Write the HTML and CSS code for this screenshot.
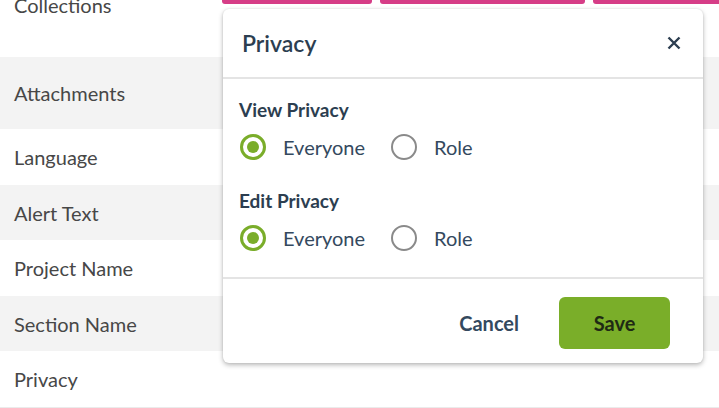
FILE: index.html
```html
<!DOCTYPE html>
<html>
<head>
<meta charset="utf-8">
<link rel="stylesheet" href="styles.css">
</head>
<body>
<div class="table">
  <div class="row row-collections">
    <div class="label">Collections</div>
    <div class="value tags">
      <span class="tag tag-a"></span>
      <span class="tag tag-b"></span>
      <span class="tag tag-c"></span>
    </div>
  </div>
  <div class="row row-alt row-tall"><div class="label">Attachments</div></div>
  <div class="row"><div class="label">Language</div></div>
  <div class="row row-alt row-short"><div class="label">Alert Text</div></div>
  <div class="row"><div class="label">Project Name</div></div>
  <div class="row row-alt row-short"><div class="label">Section Name</div></div>
  <div class="row row-last"><div class="label">Privacy</div></div>
</div>

<div class="modal">
  <div class="modal-header">
    <div class="modal-title">Privacy</div>
    <svg class="close" width="14" height="14" viewBox="0 0 14 14"><path d="M1.5 1.5 L12.5 12.5 M12.5 1.5 L1.5 12.5" stroke="#2c3e50" stroke-width="2.4" stroke-linecap="butt" fill="none"/></svg>
  </div>
  <div class="modal-body">
    <div class="group-label">View Privacy</div>
    <div class="radios">
      <div class="radio-item"><span class="radio checked"></span><span class="radio-text">Everyone</span></div>
      <div class="radio-item"><span class="radio"></span><span class="radio-text">Role</span></div>
    </div>
    <div class="group-label second">Edit Privacy</div>
    <div class="radios">
      <div class="radio-item"><span class="radio checked"></span><span class="radio-text">Everyone</span></div>
      <div class="radio-item"><span class="radio"></span><span class="radio-text">Role</span></div>
    </div>
  </div>
  <div class="modal-footer">
    <button class="btn-cancel">Cancel</button>
    <button class="btn-save">Save</button>
  </div>
</div>
</body>
</html>
```

FILE: styles.css
```css
html, body {
  margin: 0;
  padding: 0;
  background: #ffffff;
  font-family: Lato, "Open Sans", sans-serif;
  overflow: hidden;
}

.table {
  display: flex;
  flex-direction: column;
  width: 719px;
}

.row {
  display: flex;
  align-items: center;
  height: 56px;
  padding-left: 14px;
  box-sizing: border-box;
}

.row-alt { background: #f3f3f3; }
.row-tall { height: 72px; }
.row-short { height: 55px; }
.row-last { height: 57px; border-bottom: 1px solid #ebebeb; }

.label {
  width: 208px;
  font-size: 20px;
  color: #474747;
  line-height: 24px;
}

.row-collections {
  height: 57px;
  align-items: flex-start;
}
.row-collections .label { margin-top: -7px; }

.tags {
  display: flex;
  gap: 8px;
  flex: 1;
}
.tag {
  display: block;
  height: 4px;
  background: #d63d87;
  border-radius: 0 0 3px 3px;
}
.tag-a { width: 150px; }
.tag-b { width: 205px; }
.tag-c { flex: 1; border-radius: 0 0 0 3px; }

.modal {
  position: absolute;
  left: 223px;
  top: 9px;
  width: 480px;
  background: #ffffff;
  border-radius: 6px;
  box-shadow: 0 2px 5px rgba(0,0,0,0.28), 0 0 2px rgba(0,0,0,0.1);
  color: #2c3e50;
}

.modal-header {
  height: 68px;
  display: flex;
  align-items: center;
  justify-content: space-between;
  padding: 0 22px 0 19px;
  border-bottom: 2px solid #e4e4e4;
}
.modal-title {
  font-size: 23px;
  font-weight: 600;
  color: #2c3e50;
}
.close { display: block; }

.modal-body {
  padding: 20px 16px 25px 16px;
}
.group-label {
  font-size: 19px;
  font-weight: 700;
  line-height: 22px;
  color: #2c3e50;
}
.group-label.second { margin-top: 29px; }

.radios {
  display: flex;
  align-items: center;
  margin-top: 12px;
  height: 28px;
}
.radio-item {
  display: flex;
  align-items: center;
  margin-right: 25px;
}
.radio {
  width: 26px;
  height: 26px;
  box-sizing: border-box;
  border-radius: 50%;
  border: 2.5px solid #8a8a8a;
  margin-left: 1px;
  margin-right: 17px;
  display: flex;
  align-items: center;
  justify-content: center;
}
.radio.checked {
  border: 3px solid #7aad2a;
}
.radio.checked::after {
  content: "";
  width: 12px;
  height: 12px;
  border-radius: 50%;
  background: #7aad2a;
}
.radio-text {
  font-size: 20px;
  color: #34495e;
}

.modal-footer {
  border-top: 2px solid #e4e4e4;
  display: flex;
  justify-content: flex-end;
  align-items: center;
  padding: 18px 33px 14px 0;
}
.btn-cancel {
  background: none;
  border: none;
  font-family: inherit;
  font-size: 20px;
  font-weight: 700;
  color: #34495e;
  padding: 0;
  margin-right: 40px;
}
.btn-save {
  width: 111px;
  height: 52px;
  background: #7aae29;
  border: none;
  border-radius: 6px;
  font-family: inherit;
  font-size: 20px;
  font-weight: 700;
  color: #1f2a14;
}
```
